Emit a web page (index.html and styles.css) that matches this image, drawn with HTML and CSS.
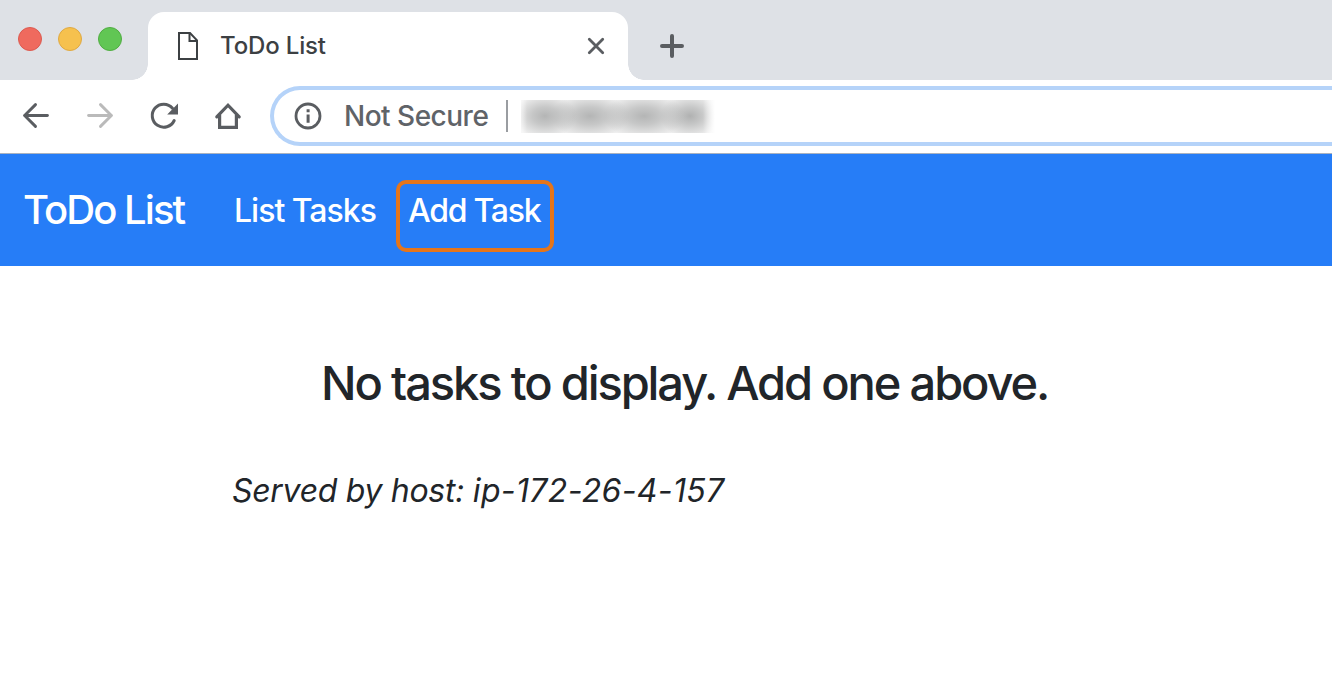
FILE: index.html
```html
<!DOCTYPE html>
<html lang="en">
<head>
<meta charset="utf-8">
<title>ToDo List</title>
<link rel="stylesheet" href="styles.css">
</head>
<body>
<header class="tabstrip">
  <div class="lights">
    <span class="light red"></span>
    <span class="light yellow"></span>
    <span class="light green"></span>
  </div>
  <div class="tab">
    <svg class="file-icon" width="20" height="28" viewBox="0 0 20 28" fill="none" stroke="#3c4043" stroke-width="2">
      <path d="M1 1H12L19 8.4V27H1Z"/><path d="M11.5 1V9H19"/>
    </svg>
    <span class="tab-title">ToDo List</span>
    <svg class="close" width="18" height="18" viewBox="0 0 18 18" stroke="#5a5d61" stroke-width="2.8" stroke-linecap="round">
      <path d="M2.3 2.3 15.7 15.7M15.7 2.3 2.3 15.7"/>
    </svg>
  </div>
  <svg class="new-tab" width="24" height="24" viewBox="0 0 24 24" stroke="#5a5d61" stroke-width="4" stroke-linecap="round">
    <path d="M12 2V22M2 12H22"/>
  </svg>
</header>
<div class="toolbar">
  <div class="controls">
    <svg width="32" height="32" viewBox="0 0 32 32" fill="none" stroke="#5a5d61" stroke-width="2.9" stroke-linecap="round" stroke-linejoin="round">
      <path d="M27.4 15.5H5"/><path d="M15.5 4.6 4.6 15.5 15.5 26.4"/>
    </svg>
    <svg width="32" height="32" viewBox="0 0 32 32" fill="none" stroke="#bababa" stroke-width="2.9" stroke-linecap="round" stroke-linejoin="round">
      <path d="M4.6 15.5H27"/><path d="M16.5 4.6 27.4 15.5 16.5 26.4"/>
    </svg>
    <svg width="32" height="32" viewBox="0 0 32 32" fill="none" stroke="#5a5d61" stroke-width="3" stroke-linecap="round">
      <path d="M26.2 20.5A11.5 11.5 0 1 1 24.5 8.2"/><path d="M30 3.5V14.4H19.2Z" fill="#5a5d61" stroke="none"/>
    </svg>
    <svg width="32" height="32" viewBox="0 0 32 32" fill="none" stroke="#5a5d61" stroke-width="3.2" stroke-linecap="round">
      <path d="M4.8 16.8 16 5.2 27.2 16.8"/><path d="M7.6 15V27.3H24.4V15"/>
    </svg>
  </div>
  <div class="omnibox">
    <svg width="28" height="28" viewBox="0 0 28 28">
      <circle cx="14" cy="14" r="12" fill="none" stroke="#5a5d61" stroke-width="2.8"/>
      <path d="M12.6 7.3H15.6V10.2H12.6ZM12.6 12.6H15.6V20.8H12.6Z" fill="#5a5d61"/>
    </svg>
    <span class="security">Not Secure</span>
    <span class="divider"></span>
    <span class="address"></span>
  </div>
</div>
<nav class="navbar">
  <a class="brand">ToDo List</a>
  <a class="link">List Tasks</a>
  <a class="link highlighted">Add Task</a>
</nav>
<main class="content">
  <h1 class="message">No tasks to display. Add one above.</h1>
  <p class="host">Served by host: <span class="ip">ip-172-26-4-157</span></p>
</main>
</body>
</html>
```
FILE: styles.css
```css
* { box-sizing: border-box; }
body {
  margin: 0;
  height: 678px;
  overflow: hidden;
  background: #fff;
  font-family: Inter, "Liberation Sans", sans-serif;
  white-space: nowrap;
}
svg { display: block; flex: none; }
.tabstrip {
  display: flex;
  height: 80px;
  background: #dee1e6;
}
.lights {
  display: flex;
  gap: 16px;
  width: 148px;
  padding: 27px 0 0 18px;
}
.light {
  width: 24px;
  height: 24px;
  border-radius: 50%;
  border: 1px solid;
}
.red { background: #ef6a5e; border-color: #dc5a50; }
.yellow { background: #f6c14e; border-color: #dfa943; }
.green { background: #61c654; border-color: #50ad42; }
.tab {
  position: relative;
  display: flex;
  align-items: center;
  width: 480px;
  height: 68px;
  margin-top: 12px;
  padding: 0 23px 0 30px;
  border-radius: 16px 16px 0 0;
  background: #fff;
}
.tab::before,
.tab::after {
  content: "";
  position: absolute;
  bottom: 0;
  width: 16px;
  height: 16px;
}
.tab::before {
  left: -16px;
  background: radial-gradient(circle at 0 0, transparent 15.5px, #fff 16px);
}
.tab::after {
  right: -16px;
  background: radial-gradient(circle at 100% 0, transparent 15.5px, #fff 16px);
}
.tab-title {
  margin-left: 22px;
  font-size: 24px;
  font-weight: 450;
  line-height: 28px;
  letter-spacing: -0.15px;
  color: #3c4043;
}
.close { margin-left: auto; }
.new-tab { margin: 34px 0 0 32px; }
.toolbar {
  display: flex;
  height: 74px;
  padding-top: 6px;
  border-bottom: 1px solid #a9b2c0;
}
.controls {
  display: flex;
  gap: 32px;
  width: 270px;
  padding: 14px 0 0 20px;
}
.omnibox {
  flex: 1;
  display: flex;
  align-items: center;
  height: 60px;
  padding-left: 20px;
  border: 4px solid #b5d3f9;
  border-right: 0;
  border-radius: 30px 0 0 30px;
}
.security {
  width: 184px;
  padding-left: 22px;
  font-size: 28px;
  font-weight: 450;
  letter-spacing: -0.5px;
  color: #5f6368;
}
.divider {
  width: 2px;
  height: 32px;
  background: #9a9da1;
}
.address {
  width: 194px;
  height: 33px;
  margin-left: 13px;
  background:
    linear-gradient(90deg, #fff8, #fff0 6px, #fff0 182px, #fff),
    radial-gradient(ellipse 32px 22px at 24px 16px, #b4b5b5 0%, #b4b5b5b0 40%, #b4b5b500 100%),
    radial-gradient(ellipse 40px 22px at 69px 16px, #b4b5b5 0%, #b4b5b5b0 40%, #b4b5b500 100%),
    radial-gradient(ellipse 42px 22px at 123px 16px, #b4b5b5 0%, #b4b5b5b0 40%, #b4b5b500 100%),
    radial-gradient(ellipse 30px 22px at 169px 16px, #b0b1b1 0%, #b4b5b5b0 40%, #b4b5b500 100%),
    #f0f0f0;
}
.navbar {
  display: flex;
  align-items: flex-start;
  height: 112px;
  padding: 26px 24px 0;
  background: #267df7;
  color: #fff;
}
.brand {
  width: 210px;
  padding-top: 6px;
  font-size: 40px;
  font-weight: 450;
  line-height: 48px;
  letter-spacing: -1.95px;
  text-indent: -1px;
}
.link {
  width: 162px;
  padding-top: 9px;
  font-size: 32px;
  font-weight: 450;
  line-height: 44px;
  letter-spacing: -1px;
}
.highlighted {
  width: 158px;
  height: 72px;
  padding: 5px 0 0 8px;
  border: 4px solid #e5751a;
  border-radius: 10px;
  letter-spacing: -1.25px;
}
.content { padding: 88px 232px 0; color: #212529; }
.message {
  margin: 0 0 0 89px;
  font-size: 47px;
  font-weight: 550;
  line-height: 58px;
  letter-spacing: -2.12px;
}
.host {
  margin: 55px 0 0;
  font-size: 32px;
  font-style: italic;
  font-weight: 400;
  line-height: 48px;
  letter-spacing: -0.3px;
}
.ip { letter-spacing: 0.35px; }
```
